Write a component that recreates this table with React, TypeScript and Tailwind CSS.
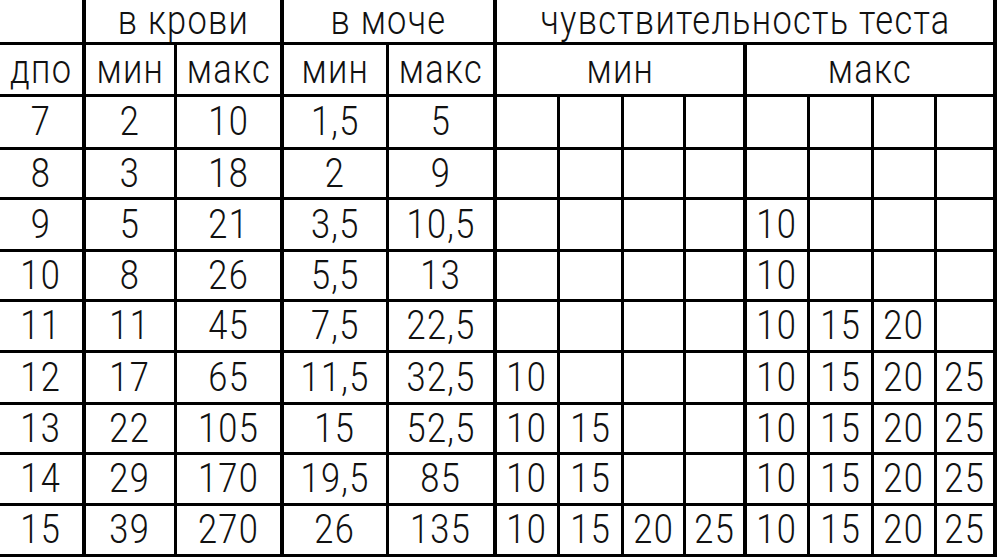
import React from "react"

const rows: string[][] = [
  ["7", "2", "10", "1,5", "5", "", "", "", "", "", "", "", ""],
  ["8", "3", "18", "2", "9", "", "", "", "", "", "", "", ""],
  ["9", "5", "21", "3,5", "10,5", "", "", "", "", "10", "", "", ""],
  ["10", "8", "26", "5,5", "13", "", "", "", "", "10", "", "", ""],
  ["11", "11", "45", "7,5", "22,5", "", "", "", "", "10", "15", "20", ""],
  ["12", "17", "65", "11,5", "32,5", "10", "", "", "", "10", "15", "20", "25"],
  ["13", "22", "105", "15", "52,5", "10", "15", "", "", "10", "15", "20", "25"],
  ["14", "29", "170", "19,5", "85", "10", "15", "", "", "10", "15", "20", "25"],
  ["15", "39", "270", "26", "135", "10", "15", "20", "25", "10", "15", "20", "25"],
]

// columns followed by a thick rule
const thick = [0, 2, 4, 8, 12]

function Cell({ children, right, className = "" }: { children?: React.ReactNode; right: "thick" | "thin"; className?: string }) {
  return (
    <div
      className={`flex items-center justify-center border-black border-b-[3px] ${
        right === "thick" ? "border-r-4" : "border-r-[3px]"
      } ${className}`}
    >
      {children && <span className="inline-block whitespace-nowrap leading-[36px] scale-x-[0.86]">{children}</span>}
    </div>
  )
}

export default function App() {
  return (
    <div
      className="w-[1000px] h-[557px] bg-white text-[#111] text-[40px] font-light leading-none tracking-[1.5px] overflow-hidden"
      style={{ fontFamily: 'Roboto, "Liberation Sans", sans-serif' }}
    >
      <div className="grid grid-cols-[86px_91px_107px_105px_108px_63px_64px_62px_61px_63px_64px_63px_60px] grid-rows-[45px_52px_53px_50px_52px_50px_51px_52px_50px_51px_51px]">
        {/* header row 1 */}
        <Cell right="thick" className="border-b-4" />
        <Cell right="thick" className="col-span-2 border-b-4">в крови</Cell>
        <Cell right="thick" className="col-span-2 border-b-4">в моче</Cell>
        <Cell right="thick" className="col-span-8 border-b-4">чувствительность теста</Cell>

        {/* header row 2 */}
        <Cell right="thick" className="border-b-4">дпо</Cell>
        <Cell right="thin" className="border-b-4">мин</Cell>
        <Cell right="thick" className="border-b-4">макс</Cell>
        <Cell right="thin" className="border-b-4">мин</Cell>
        <Cell right="thick" className="border-b-4">макс</Cell>
        <Cell right="thick" className="col-span-4 border-b-4">мин</Cell>
        <Cell right="thick" className="col-span-4 border-b-4">макс</Cell>

        {rows.map((row, r) =>
          row.map((v, c) => (
            <Cell key={`${r}-${c}`} right={thick.includes(c) ? "thick" : "thin"}>
              {v}
            </Cell>
          ))
        )}
      </div>
    </div>
  )
}
